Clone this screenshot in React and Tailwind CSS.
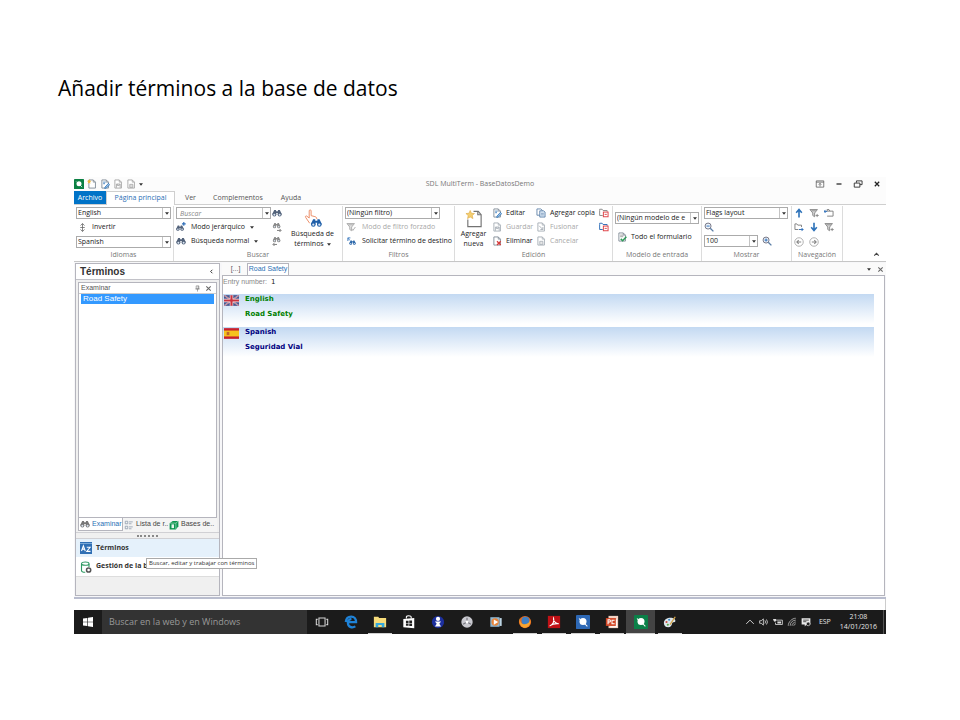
import { useState } from "react";

function Svg({ size = "size-[10px]", box = 16, children }) {
  return (
    <svg viewBox={`0 0 ${box} ${box}`} className={`${size} shrink-0`} fill="none" aria-hidden="true">
      {children}
    </svg>
  );
}

/* ---------- ribbon icons ---------- */

function BinocularShape({ color = "#52627a" }) {
  return (
    <g fill={color}>
      <path d="M3.5 3h3v2h3V3h3l3 6.500v1H9.200V8H6.800v2.500H.5v-1z" />
      <circle cx="3.800" cy="10.500" r="3.200" />
      <circle cx="12.200" cy="10.500" r="3.200" />
      <circle cx="3.800" cy="10.600" r="1.600" fill="#dbe6f3" />
      <circle cx="12.200" cy="10.600" r="1.600" fill="#dbe6f3" />
    </g>
  );
}

function Binoculars({ color, mark }) {
  return (
    <Svg>
      {mark ? (
        <g transform={mark === "plus" ? "translate(0 3) scale(.8)" : "translate(1 -1) scale(.8)"}>
          <BinocularShape color={color} />
        </g>
      ) : (
        <BinocularShape color={color} />
      )}
      {mark === "plus" && <path d="M12.500 0v6M9.500 3h6" stroke="#2b6cb8" strokeWidth="1.800" />}
      {mark === "next" && <path d="M8 13.500h6M12 11l2.500 2.500L12 16" stroke="#777" strokeWidth="1.500" />}
      {mark === "prev" && <path d="M8 13.500H2M4 11 1.500 13.500 4 16" stroke="#777" strokeWidth="1.500" />}
    </Svg>
  );
}

function Page({ color = "#7d8894", mark, size }) {
  return (
    <Svg size={size}>
      <path d="M3 1.500h7l3.500 3.500v9.500H3z" stroke={color} strokeWidth="1.400" fill="#fff" />
      <path d="M10 1.500V5h3.500" stroke={color} strokeWidth="1.200" />
      {mark === "new" && <path d="m3.500 0 1 2.500L7 3 5 4.800 5.500 7.500 3.500 6 1 7.500 2 4.800 0 3l2.500-.5z" fill="#f0b93a" />}
      {mark === "edit" && <path d="M5 5h4M5 7.500h3M8 13l5.500-6 2 2L10 14.500l-2.500.5z" stroke="#2f74b8" strokeWidth="1.300" fill="#9cc3e8" />}
      {mark === "save" && <path d="M5.500 14V8h6v6M7 8v2.500h3V8" stroke={color} strokeWidth="1.300" />}
      {mark === "delete" && <path d="m8 8.500 6 6m0-6-6 6" stroke="#d63a3a" strokeWidth="2" />}
      {mark === "cancel" && <path d="M6 8.500h5v5H6z" fill="#ddd" stroke={color} strokeWidth="1.200" />}
      {mark === "merge" && <path d="M5 6l6 6M11 8v4H7" stroke={color} strokeWidth="1.400" />}
      {mark === "form" && (
        <>
          <path d="M5 5h5M5 7.500h5" stroke="#888" strokeWidth="1.200" />
          <path d="m6 11 3 3 6-6.500" stroke="#2f9a58" strokeWidth="2.400" />
        </>
      )}
    </Svg>
  );
}

function CopyIcon() {
  return (
    <Svg>
      <path d="M1.500 1.500h6l2.500 2v8H1.500z" fill="#fff" stroke="#5e81a8" strokeWidth="1.400" />
      <path d="M6 4.500h6l2.500 2v8H6z" fill="#dce9f6" stroke="#5e81a8" strokeWidth="1.400" />
      <path d="M8 8.500h4.500M8 11h4.500" stroke="#5e81a8" />
    </Svg>
  );
}

function FieldIcon({ accent }) {
  return (
    <Svg>
      <path d="M1 4V2h4l1.500 2H13v2M1 4v8h5" stroke={accent} strokeWidth="1.500" />
      <rect x="7" y="6.500" width="7.500" height="7.500" fill="#fff" stroke="#e0474c" strokeWidth="1.600" />
      <path d="M9 10.200h3.500" stroke="#e0474c" strokeWidth="1.500" />
    </Svg>
  );
}

function Funnel({ color = "#8a8a8a", check }) {
  return (
    <Svg>
      <path d="M1.500 2.500h12L9 8v6l-3-2V8z" stroke={color} strokeWidth="1.500" fill="#d8d8d8" />
      <path d="M4 4.500h7" stroke={color} strokeWidth="1.400" />
      <path d={check ? "m9 11 2 2.500L15 8" : "M10.500 12h5M13 9.500v5"} stroke={color} strokeWidth="1.500" />
    </Svg>
  );
}

function Folder({ back }) {
  return (
    <Svg>
      <path d={back ? "M5 5h9.500v8H5M5 5V2.500h3L9.500 5" : "M12 8V5H6L4.500 3h-3v9H7"} stroke="#777" strokeWidth="1.400" />
      {back ? (
        <path d="M5 5.500H0M2.500 3 0 5.500 2.500 8" stroke="#2b6cb8" strokeWidth="1.500" />
      ) : (
        <path d="M8 12h6.500M12 9.500l2.500 2.500-2.500 2.500" stroke="#2b6cb8" strokeWidth="1.500" />
      )}
    </Svg>
  );
}

function BlueArrow({ down }) {
  return (
    <Svg>
      <path
        d={down ? "M8 1v12M3.500 8.500 8 13.500l4.500-5" : "M8 15V3M3.500 7.500 8 2.500l4.500 5"}
        stroke="#2d72b9"
        strokeWidth="2.600"
      />
    </Svg>
  );
}

function RoundArrow({ right }) {
  return (
    <Svg>
      <circle cx="8" cy="8" r="6.800" stroke="#999" strokeWidth="1.200" />
      <path d={right ? "M4.500 8h7M8.500 5l3 3-3 3" : "M11.500 8h-7M7.500 5l-3 3 3 3"} stroke="#888" strokeWidth="1.700" />
    </Svg>
  );
}

function Lens({ plus }) {
  return (
    <Svg>
      <circle cx="6.500" cy="6.500" r="4.800" stroke="#667" strokeWidth="1.400" fill="#eef4fa" />
      <path d={plus ? "M4 6.500h5M6.500 4v5" : "M4 6.500h5"} stroke="#2b6cb8" strokeWidth="1.500" />
      <path d="m10 10 5 5" stroke="#5b7ea6" strokeWidth="2.200" />
    </Svg>
  );
}

function InvertIcon() {
  return (
    <Svg size="size-[9px]">
      <path d="M8 1v14M4.500 4.500 8 1l3.500 3.500M4.500 11.500 8 15l3.500-3.500M4 8h8" stroke="#666" strokeWidth="1.400" />
    </Svg>
  );
}

function TermSearchIcon() {
  return (
    <svg viewBox="0 0 20 20" className="size-[20px]" fill="none" aria-hidden="true">
      <path
        d="M6 9.500V2c0-1.500 2-1.500 2 0v5l4 1c1.500.5 2 1 2 2.500M6 9.500 3.500 7.500c-1-.8-2 .5-1.200 1.400L6.500 15"
        stroke="#eb8a63"
        strokeWidth="1"
      />
      <g transform="translate(7.500 8.500) scale(.75)">
        <BinocularShape color="#1f5fa8" />
      </g>
    </svg>
  );
}

function AddEntryIcon() {
  return (
    <svg viewBox="0 0 20 20" className="size-[20px]" fill="none" aria-hidden="true">
      <path d="M9.500 2.500h5L17.500 6v12.500h-14V11" stroke="#737373" strokeWidth="1.200" />
      <path d="M14 2.500V6h3.500" stroke="#737373" strokeWidth="1.200" />
      <path d="m6 1.500 1.300 3 3.200.3-2.400 2.100.8 3.200L6 8.400l-2.800 1.700.7-3.200-2.400-2.100 3.200-.3z" fill="#f4cf72" stroke="#dba53a" strokeWidth=".6" />
    </svg>
  );
}

function SdlIcon({ color = "#0b8043", size = "size-[10px]" }) {
  return (
    <Svg size={size}>
      <rect width="16" height="16" rx="1" fill={color} />
      <circle cx="8" cy="7.500" r="4" fill="#fff" />
      <path d="m10 10 3 3M3.500 4 5 5.500" stroke="#fff" strokeWidth="1.200" />
    </Svg>
  );
}

/* ---------- small controls ---------- */

function Combo({ label, options, className = "" }) {
  return (
    <div className={`relative h-3 border border-[#ababab] bg-white ${className}`}>
      <select
        aria-label={label}
        className="block h-full w-full appearance-none overflow-hidden bg-transparent pr-2 pl-px text-[7px] leading-[10px] text-[#222] outline-none"
      >
        {options.map((option) => (
          <option key={option}>{option}</option>
        ))}
      </select>
      <DropMark />
    </div>
  );
}

function DropMark() {
  return (
    <span className="pointer-events-none absolute inset-y-0 right-0 flex w-2 items-center justify-center border-l border-[#c4c4c4] bg-white">
      <Caret />
    </span>
  );
}

function Caret() {
  return (
    <svg viewBox="0 0 6 4" className="h-[3px] w-[4px] shrink-0" aria-hidden="true">
      <path d="M0 0h6L3 4z" fill="#333" />
    </svg>
  );
}

function Command({ icon, children, disabled, caret, gap = "gap-1" }) {
  return (
    <button
      type="button"
      disabled={disabled}
      className={`flex h-[14px] items-center whitespace-nowrap ${gap} ${disabled ? "text-[#a8a8a8] [&>svg]:opacity-70" : ""}`}
    >
      {icon}
      {children}
      {caret && <Caret />}
    </button>
  );
}

function IconButton({ label, children, className = "" }) {
  return (
    <button type="button" aria-label={label} className={`flex h-[14px] items-center justify-center ${className}`}>
      {children}
    </button>
  );
}

function Group({ title, width, children }) {
  return (
    <section className={`flex shrink-0 flex-col border-r border-[#dcdcdc] ${width}`}>
      <div className="flex h-[43px]">{children}</div>
      <h2 className="text-center leading-[12px] text-[#777]">{title}</h2>
    </section>
  );
}

/* ---------- window ---------- */

function TitleBar() {
  return (
    <header className="grid h-[14px] grid-cols-[1fr_auto_1fr] items-center text-[#777]">
      <div className="flex items-center gap-[3px]">
        <SdlIcon />
        <Page mark="new" />
        <Page mark="edit" />
        <Page mark="save" color="#a3a3a3" />
        <Page mark="cancel" color="#a3a3a3" />
        <Caret />
      </div>
      <p>SDL MultiTerm - BaseDatosDemo</p>
      <div className="flex items-center justify-end gap-[9px] pr-1">
        <IconButton label="Opciones de cinta">
          <Svg>
            <path d="M2 3h12v10H2zM2 5h12M8 12V7M6 9l2-2 2 2" stroke="#555" strokeWidth="1.200" />
          </Svg>
        </IconButton>
        <IconButton label="Minimizar">
          <Svg>
            <path d="M4 8h8" stroke="#222" strokeWidth="2" />
          </Svg>
        </IconButton>
        <IconButton label="Restaurar">
          <Svg>
            <path d="M5.500 6V3h9v6H11M2 6.500h9V13H2z" stroke="#333" strokeWidth="1.500" />
          </Svg>
        </IconButton>
        <IconButton label="Cerrar">
          <Svg>
            <path d="m4.500 4.500 7 7m0-7-7 7" stroke="#222" strokeWidth="2" />
          </Svg>
        </IconButton>
      </div>
    </header>
  );
}

function RibbonTabs() {
  return (
    <nav className="flex h-[14px] items-stretch border-b border-[#cfcfcf] text-[#555]">
      <button type="button" className="w-8 bg-[#0173c7] pt-px text-white">
        Archivo
      </button>
      <button type="button" className="-mb-px w-[69px] border-x border-t border-[#cfcfcf] bg-white text-[#2b6fb5]">
        Página principal
      </button>
      <button type="button" className="w-[31px] pt-px">
        Ver
      </button>
      <button type="button" className="w-[64px] pt-px">
        Complementos
      </button>
      <button type="button" className="w-[42px] pt-px">
        Ayuda
      </button>
    </nav>
  );
}

function Ribbon() {
  return (
    <div className="flex h-[57px] border-b border-[#c6c6c6] bg-white pt-px text-[#222]">
      <Group title="Idiomas" width="w-[100px]">
        <div className="flex flex-1 flex-col justify-between pt-px pr-[2px] pb-px pl-[2px]">
          <Combo label="Idioma de origen" options={["English", "Spanish"]} />
          <Command icon={<InvertIcon />} gap="gap-[5px] pl-[2px]">
            Invertir
          </Command>
          <Combo label="Idioma de destino" options={["Spanish", "English"]} />
        </div>
      </Group>

      <Group title="Buscar" width="w-[169px]">
        <div className="w-[97px] pl-[2px]">
          <div className="relative my-px h-3 border border-[#ababab] bg-white">
            <input
              aria-label="Buscar"
              placeholder="Buscar"
              className="block h-full w-full bg-transparent pl-[3px] text-[7px] italic outline-none placeholder:text-[#888]"
            />
            <DropMark />
          </div>
          <Command icon={<Binoculars mark="plus" />} caret gap="gap-[5px]">
            Modo jerárquico
          </Command>
          <Command icon={<Binoculars />} caret gap="gap-[5px]">
            Búsqueda normal
          </Command>
        </div>
        <div className="flex w-3 flex-col items-center">
          <IconButton label="Buscar ahora">
            <Binoculars />
          </IconButton>
          <IconButton label="Siguiente">
            <Binoculars color="#8a8a8a" mark="next" />
          </IconButton>
          <IconButton label="Anterior">
            <Binoculars color="#8a8a8a" mark="prev" />
          </IconButton>
        </div>
        <button type="button" className="flex flex-1 flex-col items-center pt-[3px] leading-[10px]">
          <TermSearchIcon />
          <span className="mt-px">Búsqueda de</span>
          <span className="flex items-center gap-[3px]">
            términos <Caret />
          </span>
        </button>
      </Group>

      <Group title="Filtros" width="w-[112px]">
        <div className="flex-1 pl-[2px]">
          <Combo label="Filtro" options={["(Ningún filtro)"]} className="my-px w-[95px]" />
          <Command icon={<Funnel check />} disabled gap="gap-[6px] pl-px">
            Modo de filtro forzado
          </Command>
          <Command
            icon={
              <Svg>
                <path d="M3 8V3h4M3 3l3 4" stroke="#4a84c4" strokeWidth="1.600" />
                <g transform="translate(5 5) scale(.68)">
                  <BinocularShape color="#2d68aa" />
                </g>
              </Svg>
            }
            gap="gap-[6px] pl-px"
          >
            Solicitar término de destino
          </Command>
        </div>
      </Group>

      <Group title="Edición" width="w-[158px]">
        <button type="button" className="flex w-[37px] flex-col items-center pt-[3px] leading-[10px]">
          <AddEntryIcon />
          <span className="mt-px">Agregar</span>
          <span>nueva</span>
        </button>
        <div className="w-[44px]">
          <Command icon={<Page mark="edit" />}>Editar</Command>
          <Command icon={<Page mark="save" />} disabled>
            Guardar
          </Command>
          <Command icon={<Page mark="delete" />}>Eliminar</Command>
        </div>
        <div className="w-[63px]">
          <Command icon={<CopyIcon />}>Agregar copia</Command>
          <Command icon={<Page mark="merge" />} disabled>
            Fusionar
          </Command>
          <Command icon={<Page mark="cancel" />} disabled>
            Cancelar
          </Command>
        </div>
        <div>
          <IconButton label="Agregar campo">
            <FieldIcon accent="#8a8a8a" />
          </IconButton>
          <IconButton label="Agregar campo de término">
            <FieldIcon accent="#2b6cb8" />
          </IconButton>
        </div>
      </Group>

      <Group title="Modelo de entrada" width="w-[89px]">
        <div className="flex-1 px-[2px] pt-[6px]">
          <Combo label="Modelo de entrada" options={["(Ningún modelo de e"]} />
          <div className="mt-[6px] pl-[2px]">
            <Command icon={<Page mark="form" />}>Todo el formulario</Command>
          </div>
        </div>
      </Group>

      <Group title="Mostrar" width="w-[90px]">
        <div className="flex-1 pl-[2px]">
          <Combo label="Diseño" options={["Flags layout"]} className="my-px w-[84px]" />
          <IconButton label="Alejar">
            <Lens />
          </IconButton>
          <div className="flex items-center gap-1">
            <Combo label="Zoom" options={["100"]} className="w-[54px]" />
            <IconButton label="Acercar">
              <Lens plus />
            </IconButton>
          </div>
        </div>
      </Group>

      <Group title="Navegación" width="w-[51px]">
        <div className="grid w-[44px] grid-cols-3 grid-rows-3">
          <IconButton label="Entrada anterior">
            <BlueArrow />
          </IconButton>
          <IconButton label="Filtrada anterior">
            <Funnel />
          </IconButton>
          <IconButton label="Base anterior">
            <Folder back />
          </IconButton>
          <IconButton label="Base siguiente">
            <Folder />
          </IconButton>
          <IconButton label="Entrada siguiente">
            <BlueArrow down />
          </IconButton>
          <IconButton label="Filtrada siguiente">
            <Funnel />
          </IconButton>
          <IconButton label="Atrás">
            <RoundArrow />
          </IconButton>
          <IconButton label="Adelante">
            <RoundArrow right />
          </IconButton>
        </div>
      </Group>

      <div className="flex flex-1 items-end justify-end pr-[5px]">
        <IconButton label="Contraer cinta">
          <Svg size="size-[9px]">
            <path d="m4 10 4-4 4 4" stroke="#444" strokeWidth="2" />
          </Svg>
        </IconButton>
      </div>
    </div>
  );
}

function PinIcon() {
  return (
    <Svg size="size-[7px]">
      <path d="M5 2h6v7H5zM3 9h10M8 9v6M9.500 2v7" stroke="#777" strokeWidth="1.400" />
    </Svg>
  );
}

function CloseIcon() {
  return (
    <Svg size="size-[7px]">
      <path d="m3 3 10 10M13 3 3 13" stroke="#666" strokeWidth="2.400" />
    </Svg>
  );
}

function Sidebar() {
  const [tab, setTab] = useState("Examinar");
  const tabs = [
    { name: "Examinar", icon: <Binoculars color="#777" />, width: "w-[45px]" },
    {
      name: "Lista de r..",
      icon: (
        <Svg>
          <path d="M2 2h4v4H2zM2 10h4v4H2zM8 3h6M8 6h4M8 11h6M8 14h4" stroke="#8897a8" strokeWidth="1.200" />
        </Svg>
      ),
      width: "w-[45px]",
    },
    {
      name: "Bases de..",
      icon: (
        <Svg>
          <path d="m1 5 5-3.500h9V10l-4 5H1z" fill="#0d9650" />
          <path d="M11 5 15 1.500M11 5v10M1 5h10" stroke="#b8e5cc" />
          <path d="M4 7h4v6H4z" fill="#e5f5ec" />
        </Svg>
      ),
      width: "flex-1",
    },
  ];

  return (
    <aside className="relative flex w-[145px] shrink-0 flex-col border border-[#b5b5bd] bg-[#f0f0f0] font-['Liberation_Sans',sans-serif]">
      <div className="flex h-4 items-center justify-between border-b border-[#c2c2c8] bg-white px-1">
        <h2 className="text-[10px] font-bold text-[#333]">Términos</h2>
        <IconButton label="Contraer panel">
          <Svg size="size-[7px]">
            <path d="m10 4-4 4 4 4" stroke="#333" strokeWidth="2.200" />
          </Svg>
        </IconButton>
      </div>

      <div className="mx-[2px] mt-[2px] flex flex-1 flex-col border border-[#b5b5bd] bg-white">
        <div className="flex h-[11px] items-center border-b border-[#ccc] pl-[2px] text-[#555]">
          <span className="flex-1">Examinar</span>
          <IconButton label="Fijar" className="mr-1">
            <PinIcon />
          </IconButton>
          <IconButton label="Cerrar panel" className="mr-1">
            <CloseIcon />
          </IconButton>
        </div>
        <ul className="min-h-[220px] flex-1 px-[2px]">
          <li className="bg-[#3399ff] pl-[2px] text-[8px] leading-[10px] text-white">
            <button type="button" className="block">
              Road Safety
            </button>
          </li>
        </ul>
      </div>

      <div className="mx-[2px] flex h-[14px] items-start bg-[#f4f4f4]" role="tablist">
        {tabs.map((item) => (
          <button
            key={item.name}
            type="button"
            role="tab"
            aria-selected={tab === item.name}
            onClick={() => setTab(item.name)}
            className={`flex h-[13px] items-center gap-[2px] pl-px whitespace-nowrap ${item.width} ${
              tab === item.name ? "border-x border-b border-[#b5b5bd] bg-white text-[#2b6fb5]" : "text-[#444]"
            }`}
          >
            {item.icon}
            {item.name}
          </button>
        ))}
      </div>

      <div className="flex h-[7px] items-center justify-center border-y border-[#d0d0d4]">
        <span className="w-[21px] border-t-2 border-dotted border-[#888]" />
      </div>

      <button
        type="button"
        className="flex h-[18px] items-center gap-1 bg-[#e5f1fb] pl-1 font-['Open_Sans',sans-serif] text-[7px] font-bold text-[#333]"
      >
        <Svg size="size-3">
          <rect width="16" height="16" fill="#2f6fb4" />
          <path d="M0 2h16" stroke="#93bbe2" />
          <path d="m2 12 2.500-7L7 12M3 9.500h3M9 7h4.500L9 12.500h5" stroke="#fff" strokeWidth="1.400" />
        </Svg>
        Términos
      </button>
      <button
        type="button"
        className="flex h-[20px] items-center gap-1 overflow-hidden border-b border-[#ddd] bg-white pl-1 font-['Open_Sans',sans-serif] text-[7px] font-bold whitespace-nowrap text-[#333]"
      >
        <Svg size="size-3">
          <path d="M2 3.500v9C2 14 4 15 7 15M12 3.500V8" stroke="#2f9a63" strokeWidth="1.500" />
          <ellipse cx="7" cy="3.500" rx="5" ry="2.200" stroke="#2f9a63" strokeWidth="1.400" />
          <circle cx="11.500" cy="12" r="2.800" stroke="#555" strokeWidth="2" />
        </Svg>
        Gestión de la base de datos termin..
      </button>
      <div className="h-[18px]" />

      <p
        role="tooltip"
        className="absolute bottom-[26px] left-[70px] z-10 border border-[#aaa] bg-white px-[2px] font-['Open_Sans',sans-serif] text-[6px] leading-[9px] whitespace-nowrap text-[#333]"
      >
        Buscar, editar y trabajar con términos
      </p>
    </aside>
  );
}

function BritishFlag() {
  return (
    <svg viewBox="0 0 28 20" className="h-[11px] w-[15px]" aria-hidden="true">
      <path d="M0 0h28v20H0z" fill="#47568f" />
      <path d="m0 0 28 20M28 0 0 20" stroke="#c9c4d4" strokeWidth="2.500" />
      <path d="m0 0 28 20M28 0 0 20" stroke="#c9404c" strokeWidth="1" />
      <path d="M14 0v20M0 10h28" stroke="#f2f2f2" strokeWidth="6.500" />
      <path d="M14 0v20M0 10h28" stroke="#ca3340" strokeWidth="4" />
    </svg>
  );
}

function SpanishFlag() {
  return (
    <svg viewBox="0 0 28 20" className="h-[11px] w-[15px]" aria-hidden="true">
      <path d="M0 0h28v20H0z" fill="#c8202c" />
      <path d="M0 4.500h28v11H0z" fill="#f6c21c" />
      <path d="M5 7h5v6H5z" fill="#c0632c" />
    </svg>
  );
}

function LanguageBand({ flag, language, term, color }) {
  return (
    <section className="flex h-[30px] bg-linear-to-b from-[#c3d9f2] to-white">
      <div className="w-[22px] pt-px pl-px">{flag}</div>
      <div className={`font-['DejaVu_Sans',sans-serif] font-bold ${color}`}>
        <h3 className="leading-[10px]">{language}</h3>
        <p className="mt-[5px] leading-[10px]">{term}</p>
      </div>
    </section>
  );
}

function EntryView() {
  return (
    <main className="flex min-w-0 flex-1 flex-col">
      <div className="flex h-3 items-end justify-between bg-[#fafafa]">
        <div className="flex h-full pl-[2px] font-['Liberation_Sans',sans-serif]">
          <button type="button" className="w-[23px] text-[#555]">
            [...]
          </button>
          <button type="button" className="w-[42px] border-x border-t border-[#b5b5bd] bg-white whitespace-nowrap text-[#2b6fb5]">
            Road Safety
          </button>
        </div>
        <div className="flex h-full items-center gap-[6px] pr-[2px]">
          <Caret />
          <CloseIcon />
        </div>
      </div>
      <div className="mr-px flex-1 border border-[#b5b5bd] bg-white pr-[10px]">
        <p className="font-['Liberation_Sans',sans-serif] leading-[11px] text-[#888]">
          Entry number: <span className="pl-[2px] font-['DejaVu_Sans',sans-serif] text-[#222]">1</span>
        </p>
        <div className="mt-[6px] flex flex-col gap-[3px]">
          <LanguageBand flag={<BritishFlag />} language="English" term="Road Safety" color="text-[#008000]" />
          <LanguageBand flag={<SpanishFlag />} language="Spanish" term="Seguridad Vial" color="text-[#000080]" />
        </div>
      </div>
    </main>
  );
}

/* ---------- taskbar ---------- */

const taskbarApps = [
  {
    name: "Vista de tareas",
    icon: <path d="M4.500 3.500h7v9h-7zM3 5H1.500v6H3M13 5h1.500v6H13" stroke="#d5d5d5" strokeWidth="1.200" />,
  },
  {
    name: "Edge",
    icon: <path d="M2 8C2.500 3.500 5 1.800 8.200 1.800c3.800 0 5.600 2.800 5.600 6.400H5.200M13 13c-4 2.300-8.500.5-8.500-4 0-2.500 2-4.300 4-4.500" stroke="#1f83d8" strokeWidth="2.600" />,
  },
  {
    name: "Explorador",
    open: true,
    icon: (
      <>
        <path d="M1 2h5l1 1.500h8V14H1z" fill="#f7dc7b" />
        <path d="M3 14V9h10v5h-3v-2.500H6V14z" fill="#35a9dc" />
      </>
    ),
  },
  {
    name: "Tienda",
    icon: (
      <>
        <path d="M1.500 4.500 14 3.500V15l-12.500-1z" fill="#fff" />
        <path d="M5 4V2c0-1.500 5.500-1.500 5.500 0v2" stroke="#fff" strokeWidth="1.200" />
        <path d="M4.500 6.500h3v2.500h-3zM8.300 6.300h3.200V9H8.300zM4.500 9.800h3v2.500h-3zM8.300 9.800h3.200v2.800H8.300z" fill="#222" />
      </>
    ),
  },
  {
    name: "Información",
    icon: (
      <>
        <circle cx="8" cy="8" r="7" fill="#1c2f9e" />
        <circle cx="8" cy="4.500" r="2.400" fill="#fff" />
        <path d="M4.500 7.500h7L9.500 10l2 3h-7l2-3z" fill="#fff" />
      </>
    ),
  },
  {
    name: "Panel",
    icon: (
      <>
        <circle cx="8" cy="8" r="6.500" fill="#c9c9cf" />
        <path d="M8 3v5l4.500 2.500M8 8l-4.500 2.500" stroke="#77777e" strokeWidth="1.400" />
        <circle cx="8" cy="8" r="1.600" fill="#fff" />
      </>
    ),
  },
  {
    name: "Reproductor",
    icon: (
      <>
        <path d="M1.500 2.500H12v11H1.500z" fill="#8fb6cf" />
        <path d="M12 3.500h2.500v9H12z" fill="#bdd5e4" />
        <circle cx="7" cy="8" r="4.200" fill="#e8843a" />
        <path d="m5.500 5 5 3-5 3z" fill="#fff" />
      </>
    ),
  },
  {
    name: "Firefox",
    open: true,
    icon: (
      <>
        <circle cx="8" cy="8" r="7" fill="#e76a1d" />
        <circle cx="8.500" cy="6.500" r="4.500" fill="#3f7fc4" />
        <path d="M2 3c0 5 2 7.500 6 7.500 3 0 5-1.500 6-5 1 5-2 9-6 9S.5 10 2 3z" fill="#f6a531" />
      </>
    ),
  },
  {
    name: "Acrobat",
    open: true,
    icon: (
      <>
        <path d="M1 1h14v14H1z" fill="#c01116" />
        <path d="M3 12.500C7 11 8.500 7 7.500 3.500c-1 3 2.500 6.500 6 6.500-4-.5-7.500.5-10.500 2.500" stroke="#fff" strokeWidth="1.200" />
      </>
    ),
  },
  { name: "SDL Studio", open: true, sdl: "#2d68b5" },
  {
    name: "PowerPoint",
    open: true,
    icon: (
      <>
        <path d="M4 1h11v14H4z" fill="#f2d3c4" />
        <path d="M1 3.500h11.500v9H1z" fill="#d24726" />
        <path d="M3.500 10.500v-5h2q1.500 1.300 0 2.600h-2M11 6H8v4h3M6 13.500h7V5" stroke="#fff" strokeWidth="1.200" />
      </>
    ),
  },
  { name: "SDL MultiTerm", open: true, active: true, sdl: "#0b8048" },
  {
    name: "Paint",
    open: true,
    icon: (
      <>
        <path d="M1 9c0-4 4-6 7.500-6S15 5 14 7.500c-1 1.500-3 0-3.500 2C10 12 9 14 6 14s-5-2-5-5z" fill="#dce6ec" />
        <circle cx="4" cy="8" r="1.200" fill="#c94b3d" />
        <circle cx="7" cy="5.500" r="1.200" fill="#3b8bc8" />
        <circle cx="5.500" cy="11.200" r="1.200" fill="#57a64a" />
        <path d="m8 11 6-9" stroke="#d6a447" strokeWidth="1.500" />
      </>
    ),
  },
];

function Taskbar() {
  return (
    <footer className="flex h-6 items-stretch bg-[#1b1b1b] text-[#e5e5e5]">
      <button type="button" aria-label="Inicio" className="flex w-7 items-center justify-center">
        <Svg>
          <path d="M0 2.500 7 1.500v6H0zM8 1.300 16 0v7.500H8zM0 8.500h7v6l-7-1zM8 8.500h8V16l-8-1.300z" fill="#fff" />
        </Svg>
      </button>
      <input
        aria-label="Buscar en la web y en Windows"
        placeholder="Buscar en la web y en Windows"
        className="w-[205px] bg-[#333] pl-[7px] text-[9px] outline-none placeholder:text-[#999]"
      />
      <div className="flex flex-1">
        {taskbarApps.map((app) => (
          <button
            key={app.name}
            type="button"
            aria-label={app.name}
            className={`flex w-[29px] flex-col items-center ${app.active ? "bg-[#444]" : ""}`}
          >
            <span className="flex h-[23px] items-center">
              {app.sdl ? <SdlIcon color={app.sdl} size="size-[14px]" /> : <Svg size="size-[14px]">{app.icon}</Svg>}
            </span>
            {app.open && <span className={`h-px bg-[#d0d0d0] ${app.active ? "w-[29px]" : "w-6"}`} />}
          </button>
        ))}
      </div>
      <div className="flex items-center gap-1">
        <Svg>
          <path d="m2 11 6-6 6 6" stroke="#ddd" strokeWidth="1.500" />
        </Svg>
        <Svg>
          <path d="M1 6h2.500L7 3v10l-3.500-3H1zM9.500 5.500q2 2.500 0 5M12 4q3 4 0 8" stroke="#ddd" strokeWidth="1.300" />
        </Svg>
        <Svg>
          <path d="M5 5h10v7H4V9" stroke="#ddd" strokeWidth="1.300" />
          <path d="M7 7h6v3.500H7zM0 3h5v3q-2 3-4 0z" fill="#ddd" />
        </Svg>
        <Svg>
          <path d="M2 14C2 8 8 2 14 2M5 14c0-5 4-9 9-9M8 14c0-3 3-6 6-6M11 14c0-2 1-3 3-3" stroke="#bbb" strokeWidth="1.300" />
        </Svg>
        <Svg>
          <path d="M1 2h14v10H9l-3 3v-3H1z" fill="#e8e8e8" />
          <path d="M3.500 5h9M3.500 7.500h5" stroke="#222" strokeWidth="1.200" />
          <circle cx="11.500" cy="11" r="3" fill="#222" stroke="#eee" />
        </Svg>
        <span className="ml-1">ESP</span>
      </div>
      <time className="ml-[9px] flex flex-col justify-center text-center leading-[10px]" dateTime="2016-01-14T21:08">
        <span>21:08</span>
        <span>14/01/2016</span>
      </time>
      <span className="mr-[2px] ml-[6px] border-l border-[#555]" />
    </footer>
  );
}

export default function App() {
  return (
    <div className="min-h-screen bg-white px-[74px] pt-[74px] pb-20">
      <h1 className="-ml-4 font-['Open_Sans',sans-serif] text-[21px] leading-7 text-black">
        Añadir términos a la base de datos
      </h1>
      <div className="mt-[75px] bg-[#fcfcfc] font-['Open_Sans',sans-serif] text-[7px]">
        <TitleBar />
        <RibbonTabs />
        <Ribbon />
        <div className="flex min-h-[337px] gap-[2px] border-b-2 border-[#b9bdce] bg-[#f7f7f9] pt-px pb-px pl-px">
          <Sidebar />
          <EntryView />
        </div>
        <div className="h-[11px] border-r border-[#ccc] bg-white" />
        <Taskbar />
      </div>
    </div>
  );
}
